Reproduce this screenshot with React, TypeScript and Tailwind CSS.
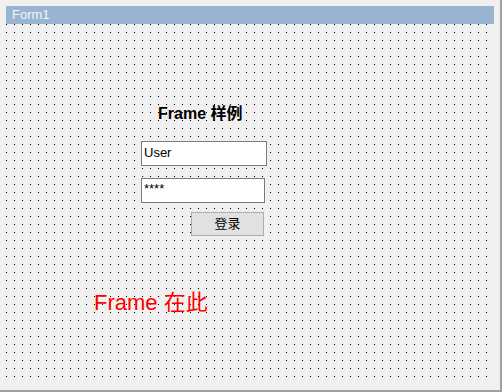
const font = { fontFamily: '"Liberation Sans", "Noto Sans CJK SC", sans-serif' };

export default function App() {
  return (
    <div
      className="w-[502px] h-[392px] bg-[#f0f0f0] border-r-2 border-b-2 border-[#a0a0a0] pt-[6px] pl-[6px]"
      style={font}
    >
      {/* designer form */}
      <div className="w-[488px] flex flex-col">
        <div className="h-[18px] bg-[#99b4d1] text-[#f4f7fb] text-[13px] leading-[18px] pl-[6px]">
          Form1
        </div>
        <div className="relative h-[360px] bg-[#f0f0f0] bg-[linear-gradient(to_bottom,transparent_1px,#f0f0f0_1px),linear-gradient(to_right,#000_1px,transparent_1px)] [background-size:8px_8px]">
          <div className="absolute left-[152px] top-[80px] text-[16px] font-bold text-black leading-[20px]">
            Frame 样例
          </div>
          <div className="absolute left-[135px] top-[117px] w-[126px] h-[25px] bg-white border border-[#7a7a7a] px-[2px] text-[13px] leading-[22px] text-black">
            User
          </div>
          <div className="absolute left-[135px] top-[154px] w-[124px] h-[25px] bg-white border border-[#7a7a7a] px-[2px] text-[13px] leading-[20px] text-black">
            ****
          </div>
          <div className="absolute left-[185px] top-[188px] w-[73px] h-[24px] bg-[#e1e1e1] border border-[#adadad] flex items-center justify-center text-[13px] text-black">
            登录
          </div>
          <div className="absolute left-[88px] top-[265px] text-[22px] leading-[28px] text-[#ff0000]">
            Frame 在此
          </div>
        </div>
      </div>
    </div>
  );
}
